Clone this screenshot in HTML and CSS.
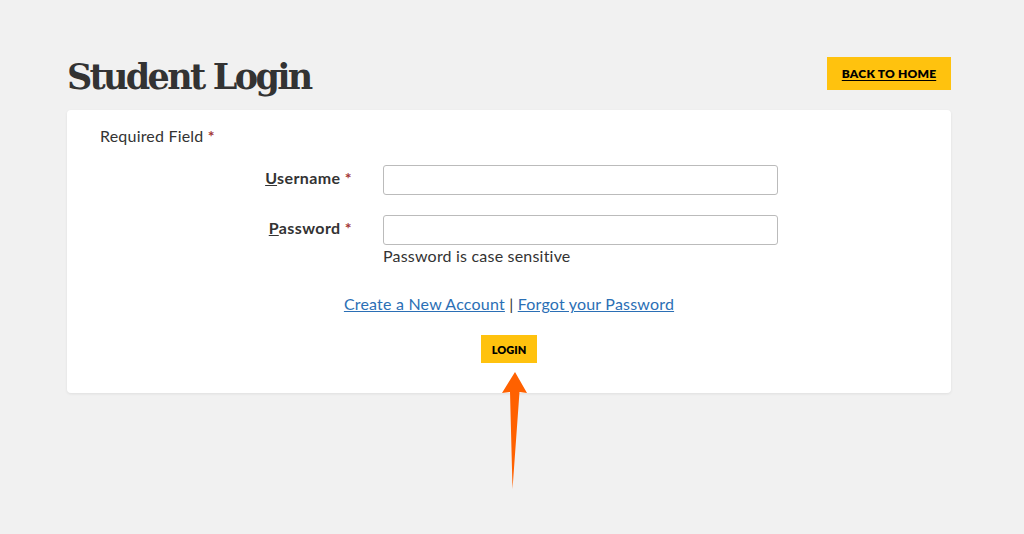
FILE: index.html
```html
<!DOCTYPE html>
<html>
<head>
<meta charset="utf-8">
<link rel="stylesheet" href="styles.css">
</head>
<body>
<div class="page">
  <header class="head">
    <h1 class="title">Student Login</h1>
    <a class="btn btn-home" href="#">BACK TO HOME</a>
  </header>
  <div class="card">
    <p class="req">Required Field <span class="star">*</span></p>
    <div class="row">
      <label class="label"><u>U</u>sername <span class="star">*</span></label>
      <div class="field"><input class="input" type="text"></div>
    </div>
    <div class="row row-pw">
      <label class="label"><u>P</u>assword <span class="star">*</span></label>
      <div class="field">
        <input class="input" type="password">
        <div class="help">Password is case sensitive</div>
      </div>
    </div>
    <p class="links"><a href="#">Create a New Account</a> | <a href="#">Forgot your Password</a></p>
    <div class="actions"><button class="btn btn-login">LOGIN</button></div>
  </div>
  <svg class="arrow" width="40" height="130" viewBox="0 0 40 130">
    <path d="M23 2 L35 23 L27.5 22 L20.5 119 L18 22 L10 23 Z" fill="#ff6100"/>
  </svg>
</div>
</body>
</html>
```
FILE: styles.css
```css
html, body { margin: 0; padding: 0; }
body {
  background: #f1f1f1;
  font-family: Lato, "Noto Sans", sans-serif;
  color: #333;
  width: 1024px;
  height: 534px;
  overflow: hidden;
}
.page {
  position: relative;
  padding: 57px 73px 0 67px;
}
.head {
  display: flex;
  justify-content: space-between;
  align-items: flex-start;
  height: 53px;
}
.title {
  margin: 0;
  font-family: "DejaVu Serif", serif;
  font-weight: bold;
  font-size: 35px;
  letter-spacing: -2.7px;
  line-height: 40px;
  color: #333;
}
.btn {
  background: #ffc20e;
  color: #000;
  font-weight: 800;
  border: none;
  font-family: Lato, "Noto Sans", sans-serif;
  display: flex;
  align-items: center;
  justify-content: center;
}
.btn-home {
  width: 124px;
  height: 33px;
  font-size: 12px;
  text-decoration: underline;
  text-underline-offset: 2px;
  letter-spacing: 0.2px;
}
.card {
  background: #fff;
  border-radius: 4px;
  box-shadow: 0 1px 3px rgba(0,0,0,0.08);
  height: 283px;
  box-sizing: border-box;
  padding: 16px 0 0 33px;
}
.req {
  margin: 0;
  font-size: 16px;
  line-height: 20px;
  letter-spacing: 0.2px;
}
.star { color: #a33434; font-weight: bold; }
.row {
  display: grid;
  grid-template-columns: 252px 395px;
  column-gap: 31px;
  margin-top: 19px;
}
.row-pw { margin-top: 20px; }
.label {
  text-align: right;
  font-weight: bold;
  font-size: 16px;
  line-height: 26px;
  letter-spacing: 0.4px;
}
.input {
  box-sizing: border-box;
  width: 395px;
  height: 30px;
  border: 1px solid #bbb;
  border-radius: 3px;
  display: block;
  margin: 0;
}
.help {
  font-size: 16px;
  line-height: 22px;
  letter-spacing: 0.2px;
}
.links {
  margin: 27px 0 0 -33px;
  text-align: center;
  font-size: 16px;
  line-height: 20px;
  letter-spacing: 0.2px;
}
.links a { color: #2b6fb5; text-decoration: underline; }
.actions {
  display: flex;
  justify-content: center;
  margin: 21px 0 0 -33px;
}
.btn-login {
  width: 56px;
  height: 28px;
  font-size: 11px;
  padding: 0;
}
.arrow {
  position: absolute;
  left: 492px;
  top: 370px;
}
```
